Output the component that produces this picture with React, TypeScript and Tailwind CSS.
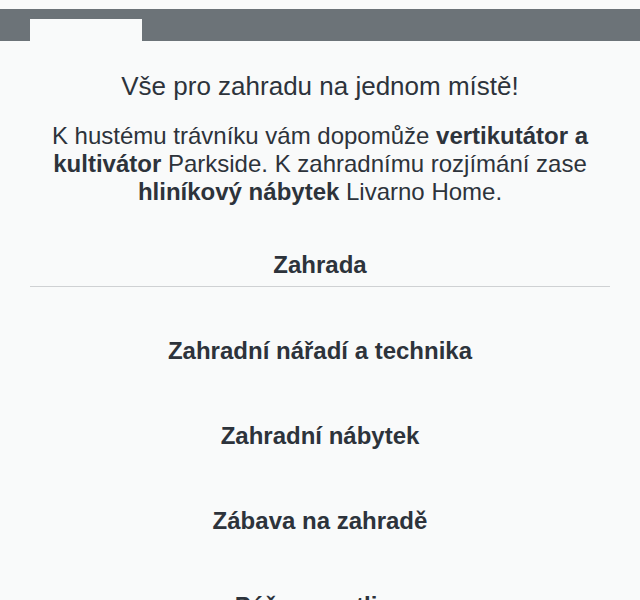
export default function App() {
  const items = ['Zahradní nářadí a technika', 'Zahradní nábytek', 'Zábava na zahradě', 'Péče o rostliny'];
  return (
    <div className="min-h-[600px] bg-[#f9fafa] pt-[9px] font-['Liberation_Sans',Arial,sans-serif] text-[#2d333b]">
      <div className="flex h-8 items-end bg-[#6c7378] px-[30px]">
        <div className="h-[22px] w-[112px] bg-[#f9fafa]" />
      </div>
      <div className="px-[30px]">
        <h1 className="mt-[30px] text-center text-[26px] leading-[30px]">Vše pro zahradu na jednom místě!</h1>
        <p className="mt-[21px] px-2 text-center text-[24px] leading-[28px]">
          K hustému trávníku vám dopomůže <b>vertikutátor a kultivátor</b> Parkside. K zahradnímu rozjímání zase{' '}
          <b>hliníkový nábytek</b> Livarno Home.
        </p>
        <h2 className="mt-[45px] border-b border-[#cfd1d3] pb-[7px] text-center text-[24px] leading-[28px] font-bold">
          Zahrada
        </h2>
        <ul className="mt-[50px] flex flex-col gap-[57px]">
          {items.map((t) => (
            <li key={t} className="text-center text-[24px] leading-[28px] font-bold">
              {t}
            </li>
          ))}
        </ul>
      </div>
    </div>
  );
}
